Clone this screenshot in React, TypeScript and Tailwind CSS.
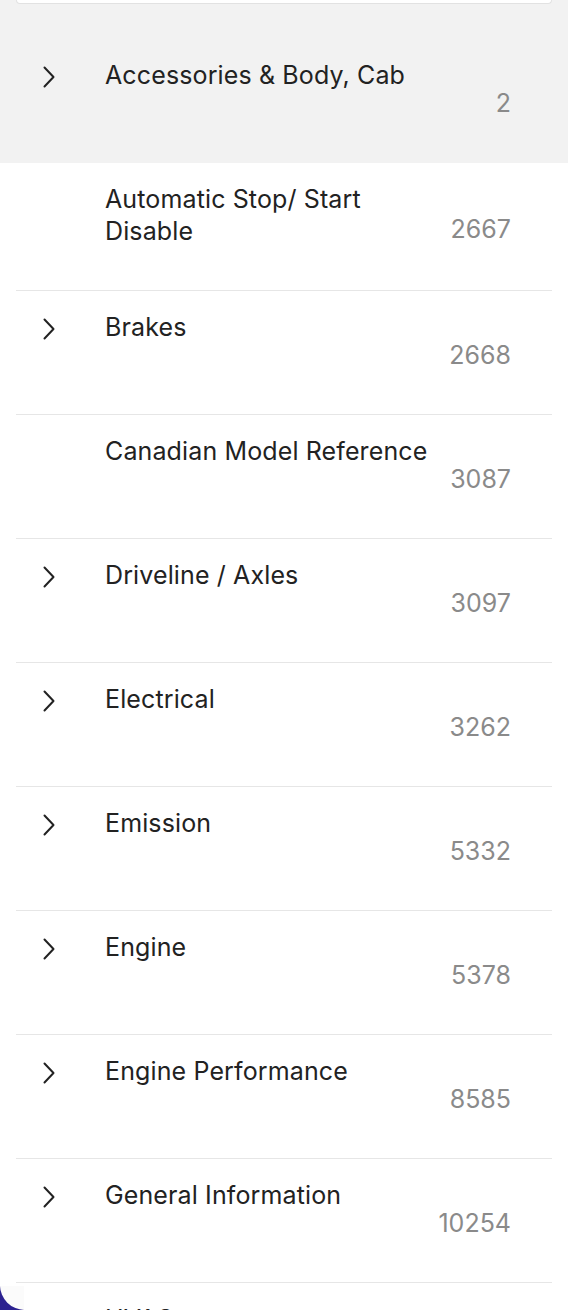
import React from "react";

type Item = { lines: string[]; count: string; chevron: boolean };

const items: Item[] = [
  { lines: ["Automatic Stop/ Start", "Disable"], count: "2667", chevron: false },
  { lines: ["Brakes"], count: "2668", chevron: true },
  { lines: ["Canadian Model Reference"], count: "3087", chevron: false },
  { lines: ["Driveline / Axles"], count: "3097", chevron: true },
  { lines: ["Electrical"], count: "3262", chevron: true },
  { lines: ["Emission"], count: "5332", chevron: true },
  { lines: ["Engine"], count: "5378", chevron: true },
  { lines: ["Engine Performance"], count: "8585", chevron: true },
  { lines: ["General Information"], count: "10254", chevron: true },
  { lines: ["HVAC"], count: "10617", chevron: true },
  { lines: ["Reminder Indicator (RESET", "PROCEDURES)"], count: "10793", chevron: false },
];

function Chevron() {
  return (
    <svg width="12" height="22" viewBox="0 0 12 22" fill="none">
      <polyline points="1.5,1.5 10.5,11 1.5,20.5" stroke="#222222" strokeWidth="2" strokeLinecap="round" strokeLinejoin="round" />
    </svg>
  );
}

function RowInner({ item, border }: { item: Item; border: boolean }) {
  return (
    <div className={`flex ${border ? "border-b border-[#e6e6e6] pb-[43px]" : "pb-[44px]"}`}>
      <div className="w-[89px] shrink-0 pl-[27px] pt-[27px]">{item.chevron ? <Chevron /> : null}</div>
      <div className="flex-1 pt-[20px] text-[25px] leading-[32px] tracking-[0.005em] text-[#222222]">
        {item.lines.map((l, i) => (
          <div key={i} className="whitespace-nowrap">
            {l}
          </div>
        ))}
      </div>
      <div className="self-center pr-[41px] pt-[48px] text-[25px] leading-[32px] text-[#8a8a8a] whitespace-nowrap">
        {item.count}
      </div>
    </div>
  );
}

export default function App() {
  return (
    <div className="relative h-[1310px] w-[568px] overflow-hidden bg-white font-['Inter',sans-serif] antialiased">
      <div className="bg-[#f2f2f2]">
        <div className="mx-4 h-[4px] rounded-b-[8px] border border-t-0 border-[#e2e2e2] bg-white" />
        <div className="h-[35px]" />
        <div className="px-4">
          <RowInner item={{ lines: ["Accessories & Body, Cab"], count: "2", chevron: true }} border={false} />
        </div>
      </div>
      {items.map((it, i) => (
        <div key={i} className="px-4">
          <RowInner item={it} border={true} />
        </div>
      ))}
      <div className="px-4 bg-[linear-gradient(to_right,rgba(255,255,255,1),rgba(255,255,255,0)_140px),linear-gradient(to_bottom,#ffffff,#f4f4f4_20px,#e9e9e9_56px)]">
        <RowInner item={{ lines: ["Restraints"], count: "10820", chevron: true }} border={false} />
      </div>
      <div className="absolute left-0 bottom-0 h-[24px] w-[24px] overflow-hidden bg-[#2b2190]">
        <div className="absolute left-0 top-[-26px] h-[50px] w-[50px] rounded-full bg-[#fbfbfb]" />
      </div>
    </div>
  );
}
